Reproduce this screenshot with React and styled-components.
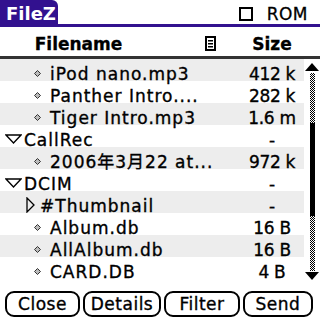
import React from 'react';
import styled, { createGlobalStyle } from 'styled-components';

const PURPLE = '#32118f';

const GlobalStyle = createGlobalStyle`
  html, body {
    margin: 0;
    padding: 0;
    background: #fff;
  }
  body {
    font-family: "DejaVu Sans", "Noto Sans CJK SC", sans-serif;
    color: #000;
  }
`;

const Screen = styled.div`
  width: 320px;
  height: 320px;
  display: flex;
  flex-direction: column;
  overflow: hidden;
  background: #fff;
`;

const TitleBar = styled.div`
  height: 24px;
  display: flex;
  align-items: stretch;
  border-bottom: 3px solid ${PURPLE};
`;

const TitleTab = styled.div`
  width: 58px;
  background: ${PURPLE};
  color: #fff;
  font-weight: bold;
  font-size: 18px;
  line-height: 28px;
  padding-left: 6px;
  box-sizing: border-box;
  border-top-right-radius: 6px;
`;

const RomToggle = styled.label`
  margin-left: auto;
  margin-right: 12px;
  display: flex;
  align-items: center;
  gap: 14px;
  font-size: 17px;
  letter-spacing: 0.5px;
  padding-top: 3px;
  -webkit-text-stroke: 0.3px #000;
`;

const CheckBox = styled.span`
  width: 10px;
  height: 10px;
  border: 2px solid #000;
`;

const Header = styled.div`
  height: 29px;
  display: flex;
  align-items: center;
  border-bottom: 3px solid #333;
  font-weight: bold;
  font-size: 17px;
`;

const NameHead = styled.div`
  width: 157px;
  text-align: center;
  padding-top: 5px;
  -webkit-text-stroke: 0.3px #000;
`;

const ColIcon = styled.svg`
  margin-left: 48px;
  margin-top: 3px;
`;

const SizeHead = styled.div`
  width: 64px;
  margin-left: 24px;
  text-align: center;
  padding-top: 5px;
  -webkit-text-stroke: 0.3px #000;
`;

const Body = styled.div`
  flex: 1;
  display: flex;
  min-height: 0;
`;

const List = styled.ul`
  margin: 0;
  padding: 0;
  width: 304px;
  list-style: none;
`;

const Row = styled.li`
  height: 22px;
  display: flex;
  align-items: flex-start;
  font-size: 17px;
  letter-spacing: 1px;
  -webkit-text-stroke: 0.35px #000;
  background: ${p => (p.$shade ? '#ededed' : '#fff')};
`;

const Name = styled.div`
  flex: 1;
  height: 22px;
  display: flex;
  align-items: center;
  padding-left: ${p => p.$indent}px;
  white-space: nowrap;
  line-height: 22px;
  padding-top: 4px;
`;

const Marker = styled.svg`
  flex: none;
  margin-right: ${p => p.$gap}px;
  margin-top: -2px;
`;

const Size = styled.div`
  width: 64px;
  text-align: center;
  line-height: 22px;
  padding-top: 4px;
  letter-spacing: -0.3px;
`;

const Scroll = styled.div`
  width: 16px;
  display: flex;
  flex-direction: column;
  align-items: center;
  padding: 4px 0 0;
`;

const Track = styled.div`
  flex: 1;
  width: 5px;
  margin: 2px 0 1px;
  background: repeating-conic-gradient(#000 0 25%, #fff 0 50%) 0 0 / 2px 2px;
  display: flex;
  flex-direction: column;
`;

const Thumb = styled.div`
  background: #000;
`;

const Footer = styled.div`
  height: 40px;
  display: flex;
  align-items: flex-start;
  gap: 3px;
  padding: 11px 0 0 5px;
  box-sizing: border-box;
`;

const Button = styled.button`
  width: ${p => p.$w}px;
  height: 26px;
  border: 2px solid #000;
  border-radius: 9px;
  background: #fff;
  font-family: "DejaVu Sans", sans-serif;
  font-size: 17px;
  letter-spacing: 0.5px;
  -webkit-text-stroke: 0.35px #000;
  color: #000;
  padding: 0;
  line-height: 22px;
`;

const Bullet = () => (
  <Marker width="7" height="7" viewBox="0 0 7 7" $gap={9}>
    <polygon points="3.5,0.5 6.5,3.5 3.5,6.5 0.5,3.5" fill="#bbb" stroke="#333" strokeWidth="1" />
  </Marker>
);

const OpenFolder = () => (
  <Marker width="17" height="10" viewBox="0 0 17 10" $gap={2}>
    <polygon points="1,1 16,1 8.5,9" fill="none" stroke="#000" strokeWidth="1.3" />
  </Marker>
);

const ClosedFolder = () => (
  <Marker width="9" height="16" viewBox="0 0 9 16" $gap={5}>
    <polygon points="1,1 8,8 1,15" fill="none" stroke="#000" strokeWidth="1.3" />
  </Marker>
);

const rows = [
  { kind: 'file', name: 'iPod nano.mp3', size: '412 k' },
  { kind: 'file', name: 'Panther Intro....', size: '282 k' },
  { kind: 'file', name: 'Tiger Intro.mp3', size: '1.6 m' },
  { kind: 'open', name: 'CallRec', size: '-' },
  { kind: 'file', name: '2006年3月22 at...', size: '972 k' },
  { kind: 'open', name: 'DCIM', size: '-' },
  { kind: 'closed', name: '#Thumbnail', size: '-' },
  { kind: 'file', name: 'Album.db', size: '16 B' },
  { kind: 'file', name: 'AllAlbum.db', size: '16 B' },
  { kind: 'file', name: 'CARD.DB', size: '4 B' },
];

const indentFor = (r) => {
  if (r.kind === 'open') return 5;
  if (r.kind === 'closed') return 26;
  return 34;
};

const App = () => (
  <Screen>
    <GlobalStyle />
    <TitleBar>
      <TitleTab>FileZ</TitleTab>
      <RomToggle>
        <CheckBox />
        ROM
      </RomToggle>
    </TitleBar>

    <Header>
      <NameHead>Filename</NameHead>
      <ColIcon width="11" height="15" viewBox="0 0 11 15">
        <rect x="1" y="1" width="9" height="13" fill="none" stroke="#000" strokeWidth="2" />
        <rect x="3" y="4" width="5" height="1.5" fill="#000" />
        <rect x="3" y="7" width="5" height="1.5" fill="#000" />
        <rect x="3" y="10" width="5" height="1.5" fill="#000" />
      </ColIcon>
      <SizeHead>Size</SizeHead>
    </Header>

    <Body>
      <List>
        {rows.map((r, i) => (
          <Row key={i} $shade={i % 2 === 0}>
            <Name $indent={indentFor(r)}>
              {r.kind === 'file' && <Bullet />}
              {r.kind === 'open' && <OpenFolder />}
              {r.kind === 'closed' && <ClosedFolder />}
              {r.name}
            </Name>
            <Size>{r.size}</Size>
          </Row>
        ))}
      </List>
      <Scroll>
        <svg width="14" height="8" viewBox="0 0 14 8">
          <polygon points="7,0 14,8 0,8" fill="#000" />
        </svg>
        <Track>
          <Thumb style={{ marginTop: 50, height: 93 }} />
        </Track>
        <svg width="14" height="8" viewBox="0 0 14 8">
          <polygon points="0,0 14,0 7,8" fill="#000" />
        </svg>
      </Scroll>
    </Body>

    <Footer>
      <Button $w={75}>Close</Button>
      <Button $w={78}>Details</Button>
      <Button $w={76}>Filter</Button>
      <Button $w={70}>Send</Button>
    </Footer>
  </Screen>
);

export default App;
